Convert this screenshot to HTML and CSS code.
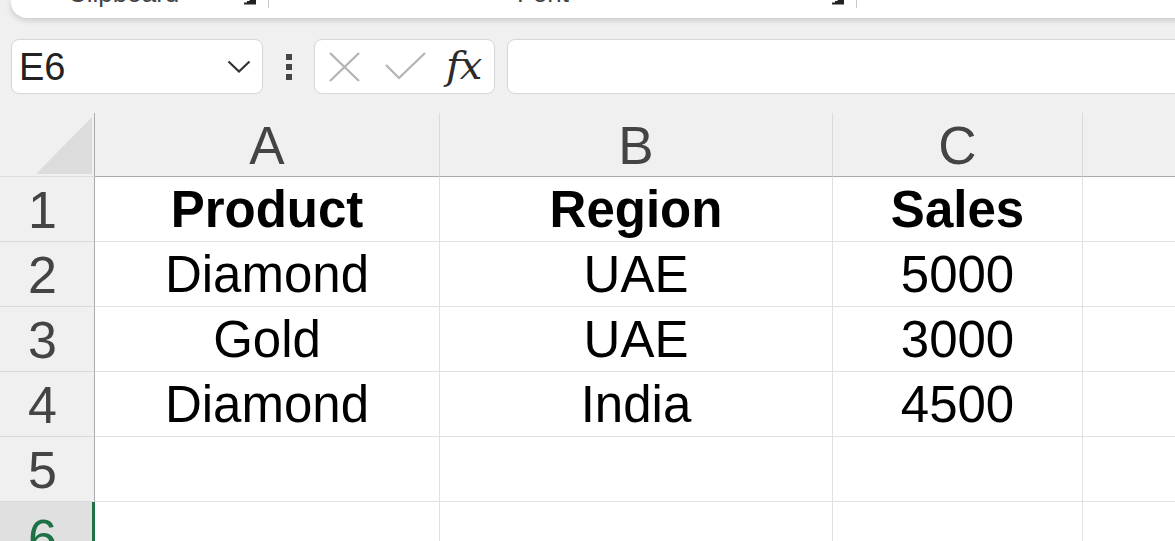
FILE: index.html
```html
<!DOCTYPE html>
<html>
<head>
<meta charset="utf-8">
<link rel="stylesheet" href="styles.css">
</head>
<body>
<div class="ribbon">
  <div class="group g-clip">
    <span class="glabel">Clipboard</span>
    <svg class="launcher" width="20" height="12" viewBox="0 0 20 12"><path d="M17 0 V10.5 H6" fill="none" stroke="#222" stroke-width="2"/><path d="M5 1 L15 9 M9 9 H15 V4" fill="none" stroke="#222" stroke-width="2"/></svg>
    <span class="sep"></span>
  </div>
  <div class="group g-font">
    <span class="glabel">Font</span>
    <svg class="launcher" width="20" height="12" viewBox="0 0 20 12"><path d="M17 0 V10.5 H6" fill="none" stroke="#222" stroke-width="2"/><path d="M5 1 L15 9 M9 9 H15 V4" fill="none" stroke="#222" stroke-width="2"/></svg>
    <span class="sep"></span>
  </div>
</div>

<div class="formula-row">
  <div class="namebox">
    <span class="ref">E6</span>
    <svg class="chev" width="24" height="13" viewBox="0 0 24 13"><path d="M1.5 1.5 L12 11.5 L22.5 1.5" fill="none" stroke="#333" stroke-width="2.2"/></svg>
  </div>
  <div class="kebab"><i></i><i></i><i></i></div>
  <div class="fxbox">
    <svg class="ico-x" width="31" height="30" viewBox="0 0 31 30"><path d="M1 1 L30 29 M30 1 L1 29" stroke="#b3b3b3" stroke-width="2.2" fill="none"/></svg>
    <svg class="ico-check" width="41" height="28" viewBox="0 0 41 28"><path d="M1 13 L14 26 L40 1" stroke="#b3b3b3" stroke-width="2.2" fill="none"/></svg>
    <span class="fx">fx</span>
  </div>
  <div class="finput"></div>
</div>

<div class="sheet">
  <div class="corner"><svg width="56" height="57" viewBox="0 0 56 57"><polygon points="0,57 56,57 56,0" fill="#dcdcdc"/></svg></div>
  <div class="ch">A</div>
  <div class="ch">B</div>
  <div class="ch">C</div>
  <div class="ch"></div>

  <div class="rh">1</div>
  <div class="c b">Product</div>
  <div class="c b">Region</div>
  <div class="c b">Sales</div>
  <div class="c"></div>

  <div class="rh">2</div>
  <div class="c">Diamond</div>
  <div class="c">UAE</div>
  <div class="c">5000</div>
  <div class="c"></div>

  <div class="rh">3</div>
  <div class="c">Gold</div>
  <div class="c">UAE</div>
  <div class="c">3000</div>
  <div class="c"></div>

  <div class="rh">4</div>
  <div class="c">Diamond</div>
  <div class="c">India</div>
  <div class="c">4500</div>
  <div class="c"></div>

  <div class="rh">5</div>
  <div class="c"></div>
  <div class="c"></div>
  <div class="c"></div>
  <div class="c"></div>

  <div class="rh sel">6</div>
  <div class="c"></div>
  <div class="c"></div>
  <div class="c"></div>
  <div class="c"></div>
</div>
</body>
</html>
```

FILE: styles.css
```css
* { box-sizing: border-box; }

html, body {
  margin: 0;
  padding: 0;
}

body {
  width: 1175px;
  height: 541px;
  overflow: hidden;
  background: #f0f0f0;
  font-family: "Liberation Sans", Arial, sans-serif;
}

/* ribbon (cut off at top) */
.ribbon {
  margin-left: 11px;
  margin-right: -30px;
  height: 18px;
  background: #fff;
  border-bottom-left-radius: 16px;
  box-shadow: 0 2px 6px rgba(0, 0, 0, 0.18);
  display: flex;
  align-items: flex-start;
  position: relative;
  z-index: 1;
}

.group {
  display: flex;
  align-items: flex-start;
  height: 18px;
}

.g-clip { width: 258px; }
.g-font { width: 588px; }

.glabel {
  font-size: 26px;
  line-height: 26px;
  margin-top: -20px;
  color: #444;
  white-space: nowrap;
}

.g-clip .glabel { margin-left: 57px; }
.g-font .glabel { margin-left: 248px; }

.launcher {
  margin-left: auto;
  margin-right: 2px;
  margin-top: -7px;
  flex: none;
}

.sep {
  width: 1px;
  height: 8px;
  background: #c8c8c8;
  margin-left: 8px;
  flex: none;
}

/* formula row */
.formula-row {
  margin-top: 21px;
  height: 55px;
  display: flex;
  align-items: center;
}

.namebox {
  margin-left: 11px;
  width: 252px;
  height: 55px;
  background: #fff;
  border: 1px solid #d6d6d6;
  border-radius: 8px;
  display: flex;
  align-items: center;
  justify-content: space-between;
  padding: 0 11px 0 7px;
}

.ref {
  font-size: 38px;
  color: #222;
  line-height: 1;
}

.kebab {
  width: 51px;
  display: flex;
  flex-direction: column;
  align-items: center;
  gap: 4px;
}

.kebab i {
  display: block;
  width: 6px;
  height: 6px;
  background: #454545;
}

.fxbox {
  width: 181px;
  height: 55px;
  background: #fff;
  border: 1px solid #d6d6d6;
  border-radius: 8px;
  display: flex;
  align-items: center;
  padding-left: 14px;
}

.ico-check { margin-left: 25px; margin-top: -2px; }

.fx {
  margin-left: 20px;
  font-family: "DejaVu Serif", "Liberation Serif", serif;
  font-style: italic;
  font-size: 40px;
  letter-spacing: -1px;
  color: #2b2b2b;
  line-height: 1;
  margin-top: -4px;
}

.finput {
  flex: 1;
  margin-left: 12px;
  margin-right: -20px;
  height: 55px;
  background: #fff;
  border: 1px solid #d6d6d6;
  border-radius: 8px;
}

/* sheet grid */
.sheet {
  margin-top: 19px;
  display: grid;
  grid-template-columns: 95px 345px 393px 250px 200px;
  grid-template-rows: 64px repeat(6, 65px);
}

.corner {
  background: #f0f0f0;
  border-right: 1px solid #ababab;
  border-bottom: 1px solid #dcdcdc;
  display: flex;
  justify-content: flex-end;
  align-items: flex-end;
  padding: 0 2px 2px 0;
}

.ch {
  background: #f0f0f0;
  border-right: 1px solid #dadada;
  border-bottom: 1px solid #ababab;
  display: flex;
  align-items: center;
  justify-content: center;
  font-size: 53px;
  color: #444;
  line-height: 1;
  padding-top: 2px;
}

.rh {
  background: #f0f0f0;
  border-right: 1px solid #ababab;
  border-bottom: 1px solid #dadada;
  display: flex;
  align-items: center;
  justify-content: center;
  padding-right: 9px;
  font-size: 52px;
  color: #444;
  line-height: 1;
  padding-top: 2px;
}

.rh.sel {
  background: #e0e0e0;
  color: #1e7145;
  border-right: 3px solid #1e7145;
  padding-right: 7px;
  align-items: flex-start;
  padding-top: 10px;
}

.c {
  background: #fff;
  border-right: 1px solid #e1e1e1;
  border-bottom: 1px solid #e1e1e1;
  display: flex;
  align-items: center;
  justify-content: center;
  font-size: 51px;
  color: #000;
  line-height: 1;
}

.c.b { font-weight: bold; }
```
